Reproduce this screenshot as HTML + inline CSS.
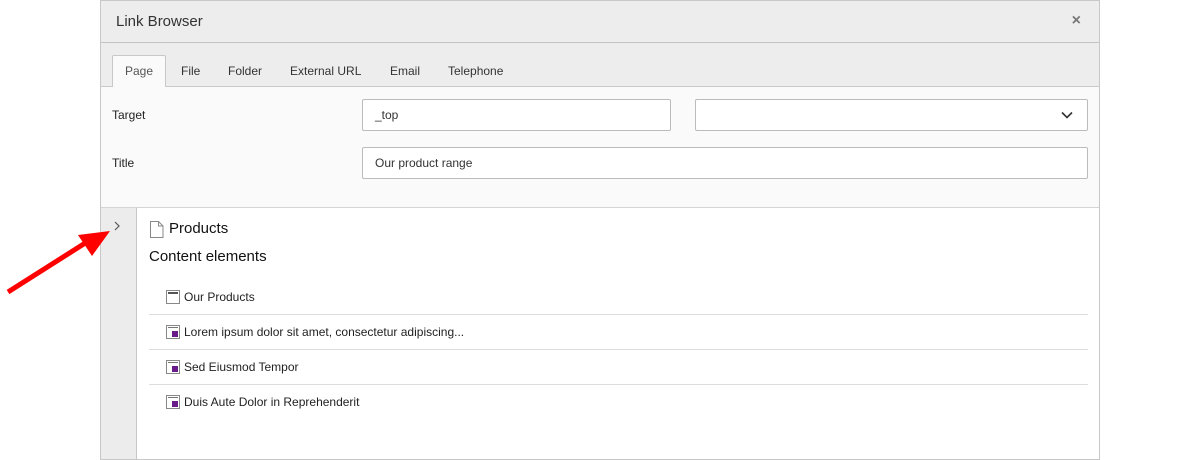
<!DOCTYPE html>
<html><head><style>
*{box-sizing:border-box;margin:0;padding:0}
body{width:1200px;height:460px;background:#fff;font-family:"Liberation Sans",sans-serif;position:relative;overflow:hidden;color:#333}
.dlg{position:absolute;left:100px;top:0;width:1000px;height:460px;border:1px solid #c8c8c8;background:#fafafa}
.hd{height:42px;background:#ededed;border-bottom:1px solid #c3c3c3;font-size:15px;padding:12px 15px;color:#333}
.x{position:absolute;right:18px;top:11px;font-size:16px;color:#777;font-weight:bold}
.tabs{height:44px;background:#ededed;border-bottom:1px solid #c8c8c8;position:relative}
.tab{position:absolute;top:21px;font-size:12px;color:#333}
.tab.a{top:12px;left:11px;width:54px;height:32px;background:#fafafa;border:1px solid #c8c8c8;border-bottom:none;border-radius:2px 2px 0 0;padding-top:8px;text-align:center;color:#555}
.lbl{position:absolute;font-size:12px;color:#222}
.inp{position:absolute;height:32px;border:1px solid #bbb;background:#fff;font-size:12px;padding:8px 12px;border-radius:2px}
.tree{position:absolute;left:0;top:206px;width:36px;bottom:0;background:#ececec;border-right:1px solid #c8c8c8;border-top:1px solid #d5d5d5}
.main{position:absolute;left:36px;top:206px;right:0;bottom:0;background:#fff;border-top:1px solid #d5d5d5}
.row{position:absolute;left:12px;right:11px;height:35px;font-size:12px;padding-top:10px;padding-left:17px;color:#222}
.row.b{border-bottom:1px solid #ddd}
.ic{display:inline-block;width:14px;height:14px;vertical-align:-3px;margin-right:4px;border:1px solid #888;background:#fff;position:relative}
</style></head><body>
<div class="dlg">
<div class="hd">Link Browser<span class="x">×</span></div>
<div class="tabs">
<div class="tab a">Page</div>
<div class="tab" style="left:80px">File</div>
<div class="tab" style="left:127px">Folder</div>
<div class="tab" style="left:189px">External URL</div>
<div class="tab" style="left:289px">Email</div>
<div class="tab" style="left:347px">Telephone</div>
</div>
<div class="lbl" style="left:11px;top:107px">Target</div>
<div class="inp" style="left:261px;top:98px;width:309px">_top</div>
<div class="inp" style="left:594px;top:98px;width:393px"><svg style="position:absolute;right:14px;top:11px" width="12" height="8" viewBox="0 0 12 8"><path d="M1 1.5l5 5 5-5" fill="none" stroke="#333" stroke-width="1.6"/></svg></div>
<div class="lbl" style="left:11px;top:155px">Title</div>
<div class="inp" style="left:261px;top:146px;width:726px">Our product range</div>
<div class="tree"><svg style="position:absolute;left:13px;top:13px" width="6" height="10" viewBox="0 0 6 10"><path d="M1 1l4 4-4 4" fill="none" stroke="#555" stroke-width="1.2"/></svg></div>
<div class="main">
<svg style="position:absolute;left:13px;top:13px" width="14" height="17" viewBox="0 0 14 17"><path d="M.5 .5h8l4.5 4.5v11.5h-12.5z M8.5 .5v4.5h4.5" fill="#fff" stroke="#888"/></svg>
<div style="position:absolute;left:32px;top:12px;font-size:15px;color:#111">Products</div>
<div style="position:absolute;left:12px;top:40px;font-size:15px;color:#111">Content elements</div>
<div class="row b" style="top:72px"><span class="ic"><span style="position:absolute;left:1px;right:1px;top:1px;height:2px;background:#555"></span></span>Our Products</div>
<div class="row b" style="top:107px"><span class="ic"><span style="position:absolute;left:1px;right:1px;top:1px;height:1px;background:#777"></span><span style="position:absolute;left:5px;top:5px;width:6px;height:6px;background:#6a1b8a"></span></span>Lorem ipsum dolor sit amet, consectetur adipiscing...</div>
<div class="row b" style="top:142px"><span class="ic"><span style="position:absolute;left:1px;right:1px;top:1px;height:1px;background:#777"></span><span style="position:absolute;left:5px;top:5px;width:6px;height:6px;background:#6a1b8a"></span></span>Sed Eiusmod Tempor</div>
<div class="row" style="top:177px"><span class="ic"><span style="position:absolute;left:1px;right:1px;top:1px;height:1px;background:#777"></span><span style="position:absolute;left:5px;top:5px;width:6px;height:6px;background:#6a1b8a"></span></span>Duis Aute Dolor in Reprehenderit</div>
</div>
</div>
<svg style="position:absolute;left:0;top:225px" width="115" height="75" viewBox="0 0 115 75"><path d="M8 67L90 15" stroke="#f00" stroke-width="5"/><path d="M110 6L78 10 92 31z" fill="#f00"/></svg>
</body></html>
